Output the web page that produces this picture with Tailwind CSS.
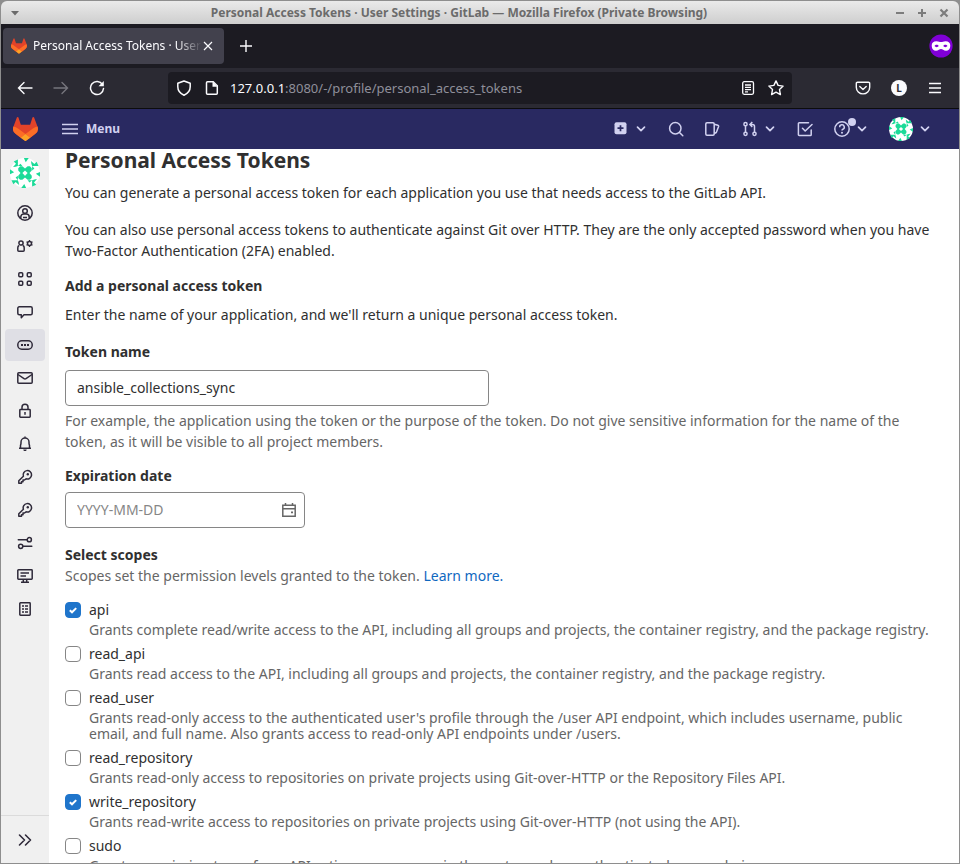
<!DOCTYPE html>
<html lang="en">
<head>
<meta charset="utf-8">
<title>Personal Access Tokens · User Settings · GitLab</title>
<script src="https://cdn.jsdelivr.net/npm/@tailwindcss/browser@4"></script>
</head>
<body class="h-screen overflow-hidden bg-[#8e8e8e] font-['Noto_Sans',sans-serif] text-sm text-[#303030]">
<svg class="hidden" aria-hidden="true">
  <symbol id="chev" viewBox="0 0 12 12"><path d="M2.500 4.200 6 7.700l3.500-3.500" fill="none" stroke="currentColor" stroke-width="1.700" stroke-linecap="round" stroke-linejoin="round"/></symbol>
  <symbol id="tanuki" viewBox="0 0 25 24">
    <path d="M24.500 9.500l-.03-.09L21.080.560a.89.89 0 0 0-1.680.100l-2.290 7H7.830l-2.290-7A.89.89 0 0 0 3.860.560L.470 9.410l-.03.09a6.300 6.300 0 0 0 2.090 7.280l5.190 3.880 4.780 3.500 4.780-3.500 5.130-3.900A6.300 6.300 0 0 0 24.500 9.500z" fill="#e24329"/>
    <path d="M24.500 9.500l-.03-.09a11.400 11.400 0 0 0-4.560 2.050l-7.450 5.630 4.740 3.580 5.130-3.900A6.300 6.300 0 0 0 24.500 9.500zM7.700 20.670l4.750-3.580-7.440-5.630A11.400 11.400 0 0 0 .470 9.410l-.03.09a6.300 6.300 0 0 0 2.090 7.280z" fill="#fc6d26"/>
    <path d="M7.700 20.670l4.750 3.500 4.750-3.500-4.750-3.580z" fill="#fca326"/>
  </symbol>
  <symbol id="identicon" viewBox="0 0 40 40">
    <clipPath id="disc"><circle cx="20" cy="20" r="20"/></clipPath>
    <circle cx="20" cy="20" r="20" fill="#fff"/>
    <g clip-path="url(#disc)" fill="#1bdb98">
      <g id="quarter">
        <path d="M13.500 11h3l3.500 3v2.500L16.500 20H14l-3-3.500v-3z"/>
        <path d="M18.500 0H25l-4 5.500z"/>
        <path d="M5 4.500L10.500 2v8.500h6L14 7.500l-3.500 3-3 1-3.500.5 4-4.500z"/>
      </g>
      <use href="#quarter" transform="rotate(90 20 20)"/>
      <use href="#quarter" transform="rotate(180 20 20)"/>
      <use href="#quarter" transform="rotate(270 20 20)"/>
    </g>
  </symbol>
  <symbol id="key" viewBox="0 0 16 16"><g fill="none" stroke="currentColor" stroke-width="1.500" stroke-linejoin="round"><path d="M6.400 7.200a4.200 4.200 0 1 1 2.700 2.600L7.500 11H6v1.700H4.500V14.200H1.800v-2.400z"/></g><circle cx="10.800" cy="5.200" r="1.200" fill="currentColor"/></symbol>
  <symbol id="tick" viewBox="0 0 16 16"><path d="M4.800 8.200l2.200 2.100 4.200-4.200" fill="none" stroke="#fff" stroke-width="2"/></symbol>
</svg>

<div class="flex h-full flex-col overflow-hidden p-px">
  <header class="flex shrink-0 flex-col">
    <div class="grid h-[23px] grid-cols-[24px_1fr_66px] items-center rounded-t-md bg-linear-to-b from-[#eaeaea] to-[#cecece] text-[#6b6b6b]">
      <button aria-label="Window menu" class="pl-2.5"><svg class="size-2" viewBox="0 0 8 8"><path d="M0 2h8L4 6.500z" fill="currentColor"/></svg></button>
      <div class="truncate text-center text-xs font-bold">Personal Access Tokens · User Settings · GitLab — Mozilla Firefox (Private Browsing)</div>
      <div class="flex items-center justify-end gap-3 pr-2.5 text-[#7c7c7c]">
        <button aria-label="Minimize"><svg class="size-2.5" viewBox="0 0 10 10"><path d="M1 5h8" stroke="currentColor" stroke-width="2"/></svg></button>
        <button aria-label="Maximize"><svg class="size-2.5" viewBox="0 0 10 10"><path d="M1 5h8M5 1v8" stroke="currentColor" stroke-width="2"/></svg></button>
        <button aria-label="Close"><svg class="size-2.5" viewBox="0 0 10 10"><path d="M1.500 1.500l7 7M8.500 1.500l-7 7" stroke="currentColor" stroke-width="2.200"/></svg></button>
      </div>
    </div>

    <div class="flex h-11 items-center bg-[#1c1b22] px-0.5 text-[#fbfbfe]">
      <div class="flex h-9 w-[221px] items-center rounded bg-[#42414d] pr-2.5 pl-2">
        <svg class="size-4 shrink-0"><use href="#tanuki"/></svg>
        <span class="ml-1.5 flex-1 overflow-hidden mask-r-from-85% text-xs whitespace-nowrap">Personal Access Tokens · User Settings</span>
        <button aria-label="Close tab"><svg class="size-3" viewBox="0 0 12 12"><path d="M2 2l8 8M10 2l-8 8" stroke="currentColor" stroke-width="1.200"/></svg></button>
      </div>
      <button aria-label="New tab" class="ml-3.5"><svg class="size-4" viewBox="0 0 16 16"><path d="M8 2v12M2 8h12" stroke="currentColor" stroke-width="1.400"/></svg></button>
      <svg class="mr-1 ml-auto size-6" viewBox="0 0 24 24"><circle cx="12" cy="12" r="11.600" fill="#8000d7"/><path d="M7.500 7.200c2.300 0 3 .9 4.500.9s2.200-.9 4.500-.9c3.200 0 4.800 1.500 4.800 4.500 0 3.200-1.900 5-4.300 5-2.300 0-3.600-1.700-5-1.700s-2.700 1.700-5 1.700c-2.400 0-4.300-1.800-4.300-5 0-3 1.600-4.500 4.800-4.500z" fill="#fff"/><path d="M5.500 12c1-1.700 3.300-1.700 4.300 0-1 1.500-3.300 1.500-4.300 0zM14.200 12c1-1.700 3.300-1.700 4.300 0-1 1.500-3.300 1.500-4.300 0z" fill="#8000d7"/></svg>
    </div>

    <div class="flex h-[41px] items-center border-b border-[#0c0c0d] bg-[#2b2a33] text-[#fbfbfe]">
      <div class="flex w-[167px] shrink-0 gap-5 pl-4">
        <button aria-label="Back"><svg class="size-4" viewBox="0 0 16 16" fill="none" stroke="currentColor" stroke-width="1.400" stroke-linecap="round"><path d="M15 8H1.500M7 2.500L1.500 8 7 13.500"/></svg></button>
        <button aria-label="Forward" class="text-[#76757d]"><svg class="size-4" viewBox="0 0 16 16" fill="none" stroke="currentColor" stroke-width="1.400" stroke-linecap="round"><path d="M1 8h13.500M9 2.500L14.500 8 9 13.500"/></svg></button>
        <button aria-label="Reload"><svg class="size-4" viewBox="0 0 16 16"><path d="M13.500 4.500A6.500 6.500 0 1 0 14.500 8.500" fill="none" stroke="currentColor" stroke-width="1.500" stroke-linecap="round"/><path d="M14.800 1v5.300H9.500z" fill="currentColor"/></svg></button>
      </div>
      <div class="flex h-8 flex-1 items-center rounded bg-[#1c1b22] px-2">
        <svg class="size-4" viewBox="0 0 16 16"><path d="M8 1l6.200 2.300v3.500c0 3.900-2.200 6.700-6.200 8.400-4-1.700-6.200-4.500-6.200-8.400V3.300z" fill="none" stroke="currentColor" stroke-width="1.500" stroke-linejoin="round"/></svg>
        <svg class="ml-3 size-4" viewBox="0 0 16 16"><path d="M3.500 1.700h5.700l4.100 4.100v7.500a1 1 0 0 1-1 1H3.500a1 1 0 0 1-1-1V2.700a1 1 0 0 1 1-1z" fill="none" stroke="currentColor" stroke-width="1.500"/><path d="M8.500 1.500v5.300h5z" fill="currentColor"/></svg>
        <div class="ml-2.5 flex-1 text-[13px] text-[#8f8f9a]"><span class="text-[#fbfbfe]">127.0.0.1</span>:8080/-/profile/personal_access_tokens</div>
        <button aria-label="Reader view"><svg class="size-4" viewBox="0 0 16 16" fill="none" stroke="currentColor" stroke-width="1.300"><rect x="2.700" y="1.700" width="10.800" height="12.600" rx="1.500"/><path d="M5 5h6M5 7.300h6M5 9.600h6M5 11.900h3"/></svg></button>
        <button aria-label="Bookmark" class="ml-3"><svg class="size-4" viewBox="0 0 16 16"><path d="M8 .9l2.100 4.500 5 .7-3.600 3.500.9 5L8 12.200l-4.400 2.400.9-5L.900 6.100l5-.7z" fill="none" stroke="currentColor" stroke-width="1.400" stroke-linejoin="round"/></svg></button>
      </div>
      <div class="flex w-[167px] shrink-0 items-center justify-end gap-5 pr-4">
        <button aria-label="Pocket"><svg class="size-4" viewBox="0 0 16 16" fill="none" stroke="currentColor" stroke-width="1.400" stroke-linecap="round" stroke-linejoin="round"><path d="M2.500 2.200h11a1.200 1.200 0 0 1 1.200 1.200v3.800a6.700 6.700 0 0 1-13.400 0V3.400a1.200 1.200 0 0 1 1.200-1.200z"/><path d="M4.800 6.500L8 9.500l3.200-3"/></svg></button>
        <button aria-label="Account" class="grid size-4 place-items-center rounded-full bg-[#fbfbfe] text-[10px] leading-4 font-bold text-[#2b2a33]">L</button>
        <button aria-label="Application menu"><svg class="size-4" viewBox="0 0 16 16"><path d="M2 3.500h12M2 8h12M2 12.500h12" stroke="currentColor" stroke-width="1.300"/></svg></button>
      </div>
    </div>
  </header>

  <nav class="flex h-10 shrink-0 items-center bg-[#292961] pr-7 pl-3 text-[#d1d1f0]">
    <a href="#" aria-label="GitLab home"><svg class="h-6 w-[25px]"><use href="#tanuki"/></svg></a>
    <button class="ml-6 flex items-center gap-2 text-xs font-bold"><svg class="size-4" viewBox="0 0 16 16"><path d="M0 3.500h16M0 8h16M0 12.500h16" stroke="currentColor" stroke-width="1.500"/></svg>Menu</button>
    <div class="ml-auto flex items-center gap-[21px]">
      <button aria-label="Create new" class="flex items-center gap-1.5"><svg class="size-4" viewBox="0 0 16 16"><rect x="1.500" y="1.200" width="12" height="12" rx="2" fill="currentColor"/><path d="M7.500 4.200v6M4.500 7.200h6" stroke="#292961" stroke-width="1.700"/></svg><svg class="size-3"><use href="#chev"/></svg></button>
      <button aria-label="Search"><svg class="size-4" viewBox="0 0 16 16" fill="none" stroke="currentColor" stroke-width="1.500" stroke-linecap="round"><circle cx="7.300" cy="7.300" r="5.700"/><path d="M11.500 11.500l3.300 3.300"/></svg></button>
      <a href="#" aria-label="Issues"><svg class="size-4" viewBox="0 0 16 16" fill="none" stroke="currentColor" stroke-width="1.500" stroke-linejoin="round"><rect x=".8" y="1.800" width="8.400" height="12.500" rx="1.200"/><path d="M9.200 3.200l3.700 1.100a1 1 0 0 1 .7 1.300L11.300 11.500l-2.100 1"/></svg></a>
      <button aria-label="Merge requests" class="flex items-center gap-1.5"><svg class="size-4" viewBox="0 0 16 16" fill="none" stroke="currentColor" stroke-width="1.500"><circle cx="3.500" cy="3.200" r="1.600"/><circle cx="3.500" cy="12.800" r="1.600"/><circle cx="12.500" cy="12.800" r="1.600"/><path d="M3.500 5v6M12.500 11V5.500a2 2 0 0 0-2-2H8.300M10.300 1L7.900 3.500l2.400 2.400"/></svg><svg class="size-3"><use href="#chev"/></svg></button>
      <a href="#" aria-label="To-do list"><svg class="size-4" viewBox="0 0 16 16" fill="none" stroke="currentColor" stroke-width="1.500" stroke-linecap="round" stroke-linejoin="round"><path d="M11.500 1.700H2.200a.8.8 0 0 0-.8.8v11.200a.8.8 0 0 0 .8.8h11.200a.8.8 0 0 0 .8-.8V9M5.500 7.300l2.700 2.700L15 3.500"/></svg></a>
      <button aria-label="Help" class="relative flex items-center gap-1.5"><svg class="size-4" viewBox="0 0 16 16"><circle cx="8" cy="8" r="7.200" fill="none" stroke="currentColor" stroke-width="1.500"/><path d="M5.700 6.300A2.300 2.300 0 1 1 8.900 8.200C8.200 8.500 8 8.800 8 9.600" fill="none" stroke="currentColor" stroke-width="1.500"/><circle cx="8" cy="11.700" r="1" fill="currentColor"/></svg><svg class="size-3"><use href="#chev"/></svg><span class="absolute -top-[3px] left-3.5 size-2 rounded-full bg-[#d1d1f0]"></span></button>
      <button aria-label="User menu" class="flex items-center gap-1.5"><svg class="size-6"><use href="#identicon"/></svg><svg class="size-3"><use href="#chev"/></svg></button>
    </div>
  </nav>

  <div class="flex min-h-0 flex-1">
    <aside class="flex w-12 shrink-0 flex-col bg-[#f0f0f0] text-[#2f2a3a]">
      <a href="#" aria-label="User settings" class="flex h-12 items-center justify-center"><svg class="size-[30px]"><use href="#identicon"/></svg></a>
      <ul class="flex flex-col gap-px px-1 [&_a]:grid [&_a]:h-8 [&_a]:place-items-center [&_a]:rounded [&_svg]:size-4">
        <li><a href="#" aria-label="Profile"><svg viewBox="0 0 16 16" fill="none" stroke="currentColor" stroke-width="1.500"><circle cx="8" cy="8" r="7.200"/><circle cx="8" cy="6" r="2.300"/><path d="M3.800 13.500V12a3 3 0 0 1 3-3h2.400a3 3 0 0 1 3 3v1.500M6 12.500h4"/></svg></a></li>
        <li><a href="#" aria-label="Account"><svg viewBox="0 0 16 16" fill="none" stroke="currentColor" stroke-width="1.500"><circle cx="4" cy="5" r="2.100"/><path d="M2 7.500a2.500 2.500 0 0 0-1.200 2.200v2.500a1 1 0 0 0 1 1h4.400a1 1 0 0 0 1-1V9.700A2.500 2.500 0 0 0 6 7.500"/><circle cx="12.500" cy="5.500" r="2"/><path d="M12.500 2v1.500M12.500 7.500V9M9.500 3.700l1.300.8M14.200 6.500l1.300.8M9.500 7.300l1.300-.8M14.200 4.500l1.300-.8" stroke-width="1.300"/></svg></a></li>
        <li><a href="#" aria-label="Applications"><svg viewBox="0 0 16 16" fill="none" stroke="currentColor" stroke-width="1.500"><rect x="1.800" y="1.800" width="3.900" height="3.900" rx="1"/><rect x="10.300" y="1.800" width="3.900" height="3.900" rx="1"/><rect x="1.800" y="10.300" width="3.900" height="3.900" rx="1"/><rect x="10.300" y="10.300" width="3.900" height="3.900" rx="1"/></svg></a></li>
        <li><a href="#" aria-label="Chat"><svg viewBox="0 0 16 16" fill="none" stroke="currentColor" stroke-width="1.500" stroke-linejoin="round"><path d="M2.300 2.800h11.400a1.500 1.500 0 0 1 1.500 1.500v5a1.500 1.500 0 0 1-1.500 1.500H7L4.300 13.700v-2.900h-2A1.500 1.500 0 0 1 .8 9.300v-5a1.500 1.500 0 0 1 1.500-1.500z"/></svg></a></li>
        <li><a href="#" aria-label="Access Tokens" aria-current="page" class="bg-[#dfdfe5]"><svg viewBox="0 0 16 16"><rect x=".8" y="3.800" width="14.400" height="8.400" rx="4" fill="none" stroke="currentColor" stroke-width="1.500"/><path d="M4 7h2v2H4zM7 7h2v2H7zM10 7h2v2h-2z" fill="currentColor"/></svg></a></li>
        <li><a href="#" aria-label="Emails"><svg viewBox="0 0 16 16" fill="none" stroke="currentColor" stroke-width="1.500" stroke-linejoin="round"><rect x=".8" y="2.800" width="14.400" height="10.400" rx="1"/><path d="M1 4.500l6 4.200a1.800 1.800 0 0 0 2 0l6-4.200"/></svg></a></li>
        <li><a href="#" aria-label="Password"><svg viewBox="0 0 16 16" fill="none" stroke="currentColor" stroke-width="1.500"><rect x="2.800" y="6.500" width="10.400" height="7.700" rx=".7"/><path d="M5 6.500V4.300a3 3 0 0 1 6 0v2.200M8 9v2.700"/></svg></a></li>
        <li><a href="#" aria-label="Notifications"><svg viewBox="0 0 16 16" fill="none" stroke="currentColor" stroke-width="1.500"><path d="M2 12.200h12M3.500 12V9.500c0-.8.500-1 .5-2.500V6a4 4 0 0 1 8 0v1c0 1.500.5 1.700.5 2.500V12M8 .500V2"/><path d="M6.300 13.500h3.400c0 2-3.400 2-3.400 0z" fill="currentColor" stroke="none"/></svg></a></li>
        <li><a href="#" aria-label="SSH Keys"><svg><use href="#key"/></svg></a></li>
        <li><a href="#" aria-label="GPG Keys"><svg><use href="#key"/></svg></a></li>
        <li><a href="#" aria-label="Preferences"><svg viewBox="0 0 16 16" fill="none" stroke="currentColor" stroke-width="1.500" stroke-linecap="round"><circle cx="12.300" cy="4.700" r="2.100"/><circle cx="3.700" cy="11.300" r="2.100"/><path d="M1.300 4.700h8.500M6.300 11.300h8.500"/></svg></a></li>
        <li><a href="#" aria-label="Active Sessions"><svg viewBox="0 0 16 16" fill="none" stroke="currentColor" stroke-width="1.500"><rect x=".8" y="1.800" width="14.400" height="9.400" rx=".7"/><path d="M3.500 5h8.500M3.500 8h5.500M4 14.200h8M6.300 11v3M9.700 11v3"/></svg></a></li>
        <li><a href="#" aria-label="Authentication log"><svg viewBox="0 0 16 16"><rect x="2.800" y="1.800" width="10.400" height="12.400" rx=".7" fill="none" stroke="currentColor" stroke-width="1.500"/><path d="M5 4.200h2v1.600H5zm3 0h3v1.600H8zM5 7.200h2v1.600H5zm3 0h3v1.600H8zM5 10.200h2v1.600H5zm3 0h3v1.600H8z" fill="currentColor"/></svg></a></li>
      </ul>
      <button aria-label="Expand sidebar" class="mt-auto grid h-12 place-items-center border-t border-[#dbdbdb]"><svg class="size-4" viewBox="0 0 16 16" fill="none" stroke="currentColor" stroke-width="1.600" stroke-linecap="round" stroke-linejoin="round"><path d="M2.500 3l5 5-5 5M8.500 3l5 5-5 5"/></svg></button>
    </aside>

    <main class="min-w-0 flex-1 overflow-hidden bg-white px-4 leading-[21px]">
      <h1 class="text-[21px] leading-[23px] font-bold">Personal Access Tokens</h1>
      <p class="mt-2.5">You can generate a personal access token for each application you use that needs access to the GitLab API.</p>
      <p class="mt-4">You can also use personal access tokens to authenticate against Git over HTTP. They are the only accepted password when you have Two-Factor Authentication (2FA) enabled.</p>
      <h2 class="mt-3.5 font-bold">Add a personal access token</h2>
      <p class="mt-2">Enter the name of your application, and we'll return a unique personal access token.</p>
      <form>
        <label for="name" class="mt-4 block font-bold">Token name</label>
        <input id="name" type="text" value="ansible_collections_sync" class="mt-2 block h-9 w-full max-w-[424px] rounded border border-[#868686] bg-white px-[11px] pb-0.5">
        <p class="mt-1 text-[#666]">For example, the application using the token or the purpose of the token. Do not give sensitive information for the name of the token, as it will be visible to all project members.</p>
        <label for="expires" class="mt-[13px] block font-bold">Expiration date</label>
        <div class="mt-1.5 flex h-9 max-w-[240px] items-center rounded border border-[#868686] bg-white pr-[7px] pl-[11px]">
          <input id="expires" type="text" placeholder="YYYY-MM-DD" class="min-w-0 flex-1 pb-0.5 placeholder:text-[#868686]">
          <button type="button" aria-label="Open date picker" class="text-[#666]"><svg class="size-4" viewBox="0 0 16 16"><path d="M1.800 3.300h12.400v10.900H1.800zM1.800 6.700h12.400M4.500 1v3M11.500 1v3" fill="none" stroke="currentColor" stroke-width="1.500"/><path d="M10 9.500h2v1.700h-2z" fill="currentColor"/></svg></button>
        </div>
        <fieldset>
          <legend class="pt-4 font-bold">Select scopes</legend>
          <p class="text-[#666]">Scopes set the permission levels granted to the token. <a href="#" class="text-[#1068bf]">Learn more.</a></p>
          <div class="mt-4 flex flex-col gap-2 leading-4 [&_input]:size-4 [&_input]:appearance-none [&_input]:rounded [&_input]:border [&_input]:border-[#868686] [&_input]:bg-white [&_input]:checked:border-[#1f75cb] [&_input]:checked:bg-[#1f75cb] [&_p]:mt-1 [&_p]:ml-6 [&_p]:text-[#666]">
            <div>
              <label class="flex gap-2"><span class="grid size-4 *:[grid-area:1/1]"><input type="checkbox" checked class="peer"><svg class="pointer-events-none hidden size-4 peer-checked:block"><use href="#tick"/></svg></span>api</label>
              <p>Grants complete read/write access to the API, including all groups and projects, the container registry, and the package registry.</p>
            </div>
            <div>
              <label class="flex gap-2"><span class="grid size-4 *:[grid-area:1/1]"><input type="checkbox" class="peer"><svg class="pointer-events-none hidden size-4 peer-checked:block"><use href="#tick"/></svg></span>read_api</label>
              <p>Grants read access to the API, including all groups and projects, the container registry, and the package registry.</p>
            </div>
            <div>
              <label class="flex gap-2"><span class="grid size-4 *:[grid-area:1/1]"><input type="checkbox" class="peer"><svg class="pointer-events-none hidden size-4 peer-checked:block"><use href="#tick"/></svg></span>read_user</label>
              <p>Grants read-only access to the authenticated user's profile through the /user API endpoint, which includes username, public email, and full name. Also grants access to read-only API endpoints under /users.</p>
            </div>
            <div>
              <label class="flex gap-2"><span class="grid size-4 *:[grid-area:1/1]"><input type="checkbox" class="peer"><svg class="pointer-events-none hidden size-4 peer-checked:block"><use href="#tick"/></svg></span>read_repository</label>
              <p>Grants read-only access to repositories on private projects using Git-over-HTTP or the Repository Files API.</p>
            </div>
            <div>
              <label class="flex gap-2"><span class="grid size-4 *:[grid-area:1/1]"><input type="checkbox" checked class="peer"><svg class="pointer-events-none hidden size-4 peer-checked:block"><use href="#tick"/></svg></span>write_repository</label>
              <p>Grants read-write access to repositories on private projects using Git-over-HTTP (not using the API).</p>
            </div>
            <div>
              <label class="flex gap-2"><span class="grid size-4 *:[grid-area:1/1]"><input type="checkbox" class="peer"><svg class="pointer-events-none hidden size-4 peer-checked:block"><use href="#tick"/></svg></span>sudo</label>
              <p>Grants permission to perform API actions as any user in the system, when authenticated as an admin user.</p>
            </div>
          </div>
        </fieldset>
      </form>
    </main>
  </div>
</div>
</body>
</html>
